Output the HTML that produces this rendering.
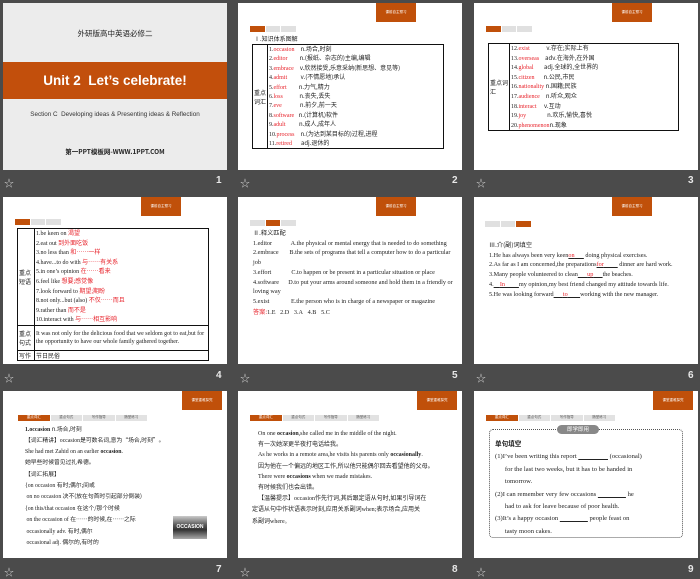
<!DOCTYPE html>
<html><head><meta charset="utf-8"><style>
*{margin:0;padding:0;box-sizing:border-box}
body{width:700px;height:576px;background:#4b4b4b;position:relative;overflow:hidden;font-family:"Liberation Serif","Noto Serif CJK SC",serif;color:#222}
.s{position:absolute;width:224px;height:167px;background:#fff;overflow:hidden}
.lb{position:absolute;color:#e8e8e8;font:bold 10px "Liberation Sans",sans-serif}
.st{position:absolute;color:#ccc;font-size:10px}
.tag{position:absolute;top:0;width:40px;height:19px;background:#c0500a;color:#fff;font-size:3.5px;text-align:center;line-height:19px;font-family:"Noto Sans CJK SC",sans-serif}
.tabs{position:absolute;left:12px;top:23px;width:47px;height:6px;background:#e0e0e0;display:flex}
.tabs i{flex:1;border-right:1px solid #fff}
.tabs i.o{background:#c0500a}
.tabs4{position:absolute;left:15px;top:24px;width:130px;height:6px;background:#e2e2e2;display:flex}
.tabs4 i{flex:1;border-right:1px solid #fff;font-style:normal;font-size:3.5px;color:#555;text-align:center;line-height:6px;font-family:"Noto Sans CJK SC",sans-serif}
.tabs4 i.o{background:#c0500a;color:#fff}
.t{position:absolute;font-size:6.2px;line-height:9.7px;white-space:nowrap}
.r{color:#e8222a}
table{position:absolute;border-collapse:collapse;border:1.5px solid #111;font-size:6px}
td{border:1px solid #111;vertical-align:middle;padding:0 1px}
.cj{font-family:"Noto Sans CJK SC",sans-serif}
</style></head><body>

<!-- slide 1 -->
<div class="s" style="left:3px;top:3px;background:#ececec">
 <div class="t cj" style="left:0;width:224px;text-align:center;top:26px;font-size:7.5px">外研版高中英语必修二</div>
 <div style="position:absolute;left:0;top:59px;width:224px;height:37px;background:#c24f0c;color:#fff;font:bold 13.5px 'Liberation Sans',sans-serif;text-align:center;line-height:37px">Unit 2&nbsp; Let’s celebrate!</div>
 <div class="t" style="left:0;width:224px;text-align:center;top:108px;font:6.3px 'Liberation Sans',sans-serif;color:#333">Section C&nbsp; Developing ideas &amp; Presenting ideas &amp; Reflection</div>
 <div class="t cj" style="left:0;width:224px;text-align:center;top:144px;font-size:6.5px;font-weight:bold">第一PPT模板网-WWW.1PPT.COM</div>
</div>
<div class="st" style="left:4px;top:175px">☆</div><div class="lb" style="left:216px;top:175px">1</div>

<!-- slide 2 -->
<div class="s" style="left:238px;top:3px">
 <div class="tag" style="left:138px">课前自主预习</div>
 <div class="tabs"><i class="o"></i><i></i><i></i></div>
 <div class="t cj" style="left:16px;top:31px;font-size:6px">Ⅰ.知识体系图解</div>
 <table style="left:14px;top:41px;width:192px;height:97px">
  <tr><td style="width:15px" class="cj">重点词汇</td><td style="line-height:8.4px;white-space:nowrap">
  1.<span class="r">occasion</span>&nbsp;&nbsp;&nbsp;&nbsp;<span class="cj">n.场合,时刻</span><br>
  2.<span class="r">editor</span>&nbsp;&nbsp;&nbsp;&nbsp;&nbsp;&nbsp;&nbsp;&nbsp;<span class="cj">n.(报纸、杂志的)主编,编辑</span><br>
  3.<span class="r">embrace</span>&nbsp;&nbsp;&nbsp;&nbsp;<span class="cj">v.欣然接受,乐意采纳(新思想、意见等)</span><br>
  4.<span class="r">admit</span>&nbsp;&nbsp;&nbsp;&nbsp;&nbsp;&nbsp;&nbsp;&nbsp;&nbsp;<span class="cj">v.(不情愿地)承认</span><br>
  5.<span class="r">effort</span>&nbsp;&nbsp;&nbsp;&nbsp;&nbsp;&nbsp;&nbsp;&nbsp;<span class="cj">n.力气,精力</span><br>
  6.<span class="r">loss</span>&nbsp;&nbsp;&nbsp;&nbsp;&nbsp;&nbsp;&nbsp;&nbsp;&nbsp;&nbsp;&nbsp;<span class="cj">n.丧失,丢失</span><br>
  7.<span class="r">eve</span>&nbsp;&nbsp;&nbsp;&nbsp;&nbsp;&nbsp;&nbsp;&nbsp;&nbsp;&nbsp;&nbsp;&nbsp;<span class="cj">n.前夕,前一天</span><br>
  8.<span class="r">software</span>&nbsp;&nbsp;&nbsp;<span class="cj">n.(计算机)软件</span><br>
  9.<span class="r">adult</span>&nbsp;&nbsp;&nbsp;&nbsp;&nbsp;&nbsp;&nbsp;&nbsp;&nbsp;<span class="cj">n.成人,成年人</span><br>
  10.<span class="r">process</span>&nbsp;&nbsp;&nbsp;&nbsp;<span class="cj">n.(为达到某目标的)过程,进程</span><br>
  11.<span class="r">retired</span>&nbsp;&nbsp;&nbsp;&nbsp;&nbsp;&nbsp;<span class="cj">adj.退休的</span></td></tr>
 </table>
</div>
<div class="st" style="left:240px;top:175px">☆</div><div class="lb" style="left:452px;top:175px">2</div>

<!-- slide 3 -->
<div class="s" style="left:474px;top:3px">
 <div class="tag" style="left:138px">课前自主预习</div>
 <div class="tabs"><i class="o"></i><i></i><i></i></div>
 <table style="left:14px;top:40px;width:191px;height:80px">
  <tr><td style="width:21px" class="cj">重点词汇</td><td style="line-height:8.6px;white-space:nowrap">
  12.<span class="r">exist</span>&nbsp;&nbsp;&nbsp;&nbsp;&nbsp;&nbsp;&nbsp;&nbsp;&nbsp;&nbsp;&nbsp;<span class="cj">v.存在;实际上有</span><br>
  13.<span class="r">overseas</span>&nbsp;&nbsp;&nbsp;&nbsp;<span class="cj">adv.在海外,在外国</span><br>
  14.<span class="r">global</span>&nbsp;&nbsp;&nbsp;&nbsp;&nbsp;&nbsp;&nbsp;<span class="cj">adj.全球的,全世界的</span><br>
  15.<span class="r">citizen</span>&nbsp;&nbsp;&nbsp;&nbsp;&nbsp;&nbsp;<span class="cj">n.公民,市民</span><br>
  16.<span class="r">nationality</span>&nbsp;<span class="cj">n.国籍;民族</span><br>
  17.<span class="r">audience</span>&nbsp;&nbsp;&nbsp;&nbsp;<span class="cj">n.听众,观众</span><br>
  18.<span class="r">interact</span>&nbsp;&nbsp;&nbsp;&nbsp;&nbsp;<span class="cj">v.互动</span><br>
  19.<span class="r">joy</span>&nbsp;&nbsp;&nbsp;&nbsp;&nbsp;&nbsp;&nbsp;&nbsp;&nbsp;&nbsp;&nbsp;&nbsp;&nbsp;&nbsp;<span class="cj">n.欢乐,愉快,喜悦</span><br>
  20.<span class="r">phenomenon</span><span class="cj">n.现象</span></td></tr>
 </table>
</div>
<div class="st" style="left:476px;top:175px">☆</div><div class="lb" style="left:688px;top:175px">3</div>

<!-- slide 4 -->
<div class="s" style="left:3px;top:197px">
 <div class="tag" style="left:138px">课前自主预习</div>
 <div class="tabs" style="top:22px;left:12px"><i class="o"></i><i></i><i></i></div>
 <table style="left:14px;top:31px;width:192px;height:121px">
  <tr><td style="width:17px" class="cj">重点短语</td><td style="line-height:8.6px;white-space:nowrap">
  1.be keen on <span class="r cj">渴望</span><br>2.eat out <span class="r cj">到外面吃饭</span><br>3.no less than <span class="r cj">和……一样</span><br>4.have...to do with <span class="r cj">与……有关系</span><br>5.in one’s opinion <span class="r cj">在……看来</span><br>6.feel like <span class="r cj">想要;感觉像</span><br>7.look forward to <span class="r cj">期望;期盼</span><br>8.not only...but (also) <span class="r cj">不仅……而且</span><br>9.rather than <span class="r cj">而不是</span><br>10.interact with <span class="r cj">与……相互影响</span></td></tr>
  <tr><td class="cj">重点句式</td><td style="line-height:8px;height:25px">It was not only for the delicious food that we seldom got to eat,but for the opportunity to have our whole family gathered together.</td></tr>
  <tr><td class="cj">写作</td><td class="cj" style="height:9px">节日民俗</td></tr>
 </table>
</div>
<div class="st" style="left:4px;top:370px">☆</div><div class="lb" style="left:216px;top:370px">4</div>

<!-- slide 5 -->
<div class="s" style="left:238px;top:197px">
 <div class="tag" style="left:138px">课前自主预习</div>
 <div class="tabs"><i></i><i class="o"></i><i></i></div>
 <div class="t" style="left:15px;top:31px;white-space:normal;width:200px">
 <span class="cj">Ⅱ.释义匹配</span><br>
 1.editor&nbsp;&nbsp;&nbsp;&nbsp;&nbsp;&nbsp;&nbsp;&nbsp;&nbsp;&nbsp;&nbsp;&nbsp;A.the physical or mental energy that is needed to do something<br>
 2.embrace&nbsp;&nbsp;&nbsp;&nbsp;&nbsp;&nbsp;&nbsp;B.the sets of programs that tell a computer how to do a particular job<br>
 3.effort&nbsp;&nbsp;&nbsp;&nbsp;&nbsp;&nbsp;&nbsp;&nbsp;&nbsp;&nbsp;&nbsp;&nbsp;&nbsp;C.to happen or be present in a particular situation or place<br>
 4.software&nbsp;&nbsp;&nbsp;&nbsp;&nbsp;&nbsp;D.to put your arms around someone and hold them in a friendly or loving way<br>
 5.exist&nbsp;&nbsp;&nbsp;&nbsp;&nbsp;&nbsp;&nbsp;&nbsp;&nbsp;&nbsp;&nbsp;&nbsp;&nbsp;&nbsp;E.the person who is in charge of a newspaper or magazine<br>
 <span class="r cj">答案:</span>1.E&nbsp;&nbsp; 2.D&nbsp;&nbsp; 3.A&nbsp;&nbsp; 4.B&nbsp;&nbsp; 5.C</div>
</div>
<div class="st" style="left:240px;top:370px">☆</div><div class="lb" style="left:452px;top:370px">5</div>

<!-- slide 6 -->
<div class="s" style="left:474px;top:197px">
 <div class="tag" style="left:138px">课前自主预习</div>
 <div class="tabs" style="left:11px;top:24px"><i></i><i></i><i class="o"></i></div>
 <div class="t" style="left:15px;top:43px;white-space:normal;width:200px">
 <span class="cj">Ⅲ.介(副)词填空</span><br>
 1.He has always been very keen<u><span class="r">on</span>&nbsp;&nbsp;&nbsp;&nbsp;&nbsp;&nbsp;</u> doing physical exercises.<br>
 2.As far as I am concerned,the preparations<u><span class="r">for</span>&nbsp;&nbsp;&nbsp;&nbsp;&nbsp;&nbsp;&nbsp;&nbsp;&nbsp;</u> dinner are hard work.<br>
 3.Many people volunteered to clean<u>&nbsp;&nbsp;&nbsp;&nbsp;&nbsp;&nbsp;<span class="r">up</span>&nbsp;&nbsp;&nbsp;&nbsp;&nbsp;&nbsp;</u>the beaches.<br>
 4.<u>&nbsp;&nbsp;&nbsp;&nbsp;<span class="r">In</span>&nbsp;&nbsp;&nbsp;&nbsp;&nbsp;&nbsp;&nbsp;&nbsp;&nbsp;</u>my opinion,my best friend changed my attitude towards life.<br>
 5.He was looking forward<u>&nbsp;&nbsp;&nbsp;&nbsp;&nbsp;&nbsp;<span class="r">to</span>&nbsp;&nbsp;&nbsp;&nbsp;&nbsp;&nbsp;&nbsp;&nbsp;</u>working with the new manager.</div>
</div>
<div class="st" style="left:476px;top:370px">☆</div><div class="lb" style="left:688px;top:370px">6</div>

<!-- slide 7 -->
<div class="s" style="left:3px;top:391px">
 <div class="tag" style="left:179px">课堂重难探究</div>
 <div class="tabs4"><i class="o">重点词汇</i><i>重点句式</i><i>写作指导</i><i>随堂练习</i></div>
 <div class="t" style="left:22px;top:33px;line-height:10.4px;font-size:5.8px">
 <b>1.occasion</b> <span class="cj">n.场合,时刻</span><br>
 <span class="cj">【词汇精讲】</span>occasion<span class="cj">是可数名词,意为“场合,时刻”。</span><br>
 She had met Zahid on an earlier <b>occasion</b>.<br>
 <span class="cj">她早些时候曾见过扎希德。</span><br>
 <span class="cj">【词汇拓展】</span><br>
 {on occasion <span class="cj">有时;偶尔;间或</span><br>
 &nbsp;on no occasion <span class="cj">决不(放在句首时引起部分倒装)</span><br>
 {on this/that occasion <span class="cj">在这个/那个时候</span><br>
 &nbsp;on the occasion of <span class="cj">在……的时候,在……之际</span><br>
 &nbsp;occasionally adv. <span class="cj">有时,偶尔</span><br>
 &nbsp;occasional adj. <span class="cj">偶尔的,有时的</span></div>
 <div style="position:absolute;left:170px;top:125px;width:34px;height:23px;background:linear-gradient(#ccc,#555 40%,#333 60%,#aaa);color:#fff;font:bold 5px 'Liberation Sans',sans-serif;text-align:center;line-height:23px">OCCASION</div>
</div>
<div class="st" style="left:4px;top:564px">☆</div><div class="lb" style="left:216px;top:564px">7</div>

<!-- slide 8 -->
<div class="s" style="left:238px;top:391px">
 <div class="tag" style="left:179px">课堂重难探究</div>
 <div class="tabs4" style="left:12px"><i class="o">重点词汇</i><i>重点句式</i><i>写作指导</i><i>随堂练习</i></div>
 <div class="t" style="left:20px;top:38px;line-height:10.2px;font-size:6px">
 On one <b>occasion</b>,she called me in the middle of the night.<br>
 <span class="cj">有一次她深更半夜打电话给我。</span><br>
 As he works in a remote area,he visits his parents only <b>occasionally</b>.<br>
 <span class="cj">因为他在一个偏远的地区工作,所以他只能偶尔回去看望他的父母。</span><br>
 There were <b>occasions</b> when we made mistakes.<br>
 <span class="cj">有时候我们也会出错。</span><br>
 <span class="cj">【温馨提示】</span>occasion<span class="cj">作先行词,其后跟定语从句时,如果引导词在</span><br>
 <span class="cj" style="margin-left:-6px">定语从句中作状语表示时刻,应用关系副词</span>when;<span class="cj">表示场合,应用关</span><br>
 <span class="cj" style="margin-left:-6px">系副词</span>where。</div>
</div>
<div class="st" style="left:240px;top:564px">☆</div><div class="lb" style="left:452px;top:564px">8</div>

<!-- slide 9 -->
<div class="s" style="left:474px;top:391px">
 <div class="tag" style="left:179px">课堂重难探究</div>
 <div class="tabs4" style="left:12px"><i class="o">重点词汇</i><i>重点句式</i><i>写作指导</i><i>随堂练习</i></div>
 <div style="position:absolute;left:15px;top:38px;width:194px;height:109px;border:1.5px dotted #555;border-radius:4px"></div>
 <div class="cj" style="position:absolute;left:83px;top:34px;width:42px;height:9px;background:#888;border-radius:5px;color:#fff;font-size:5.5px;text-align:center;line-height:9px">即学即用</div>
 <div class="t" style="left:21px;top:46px;line-height:12.4px;font-size:6.6px;color:#222">
 <b class="cj">单句填空</b><br>
 (1)I’ve been writing this report <u>&nbsp;&nbsp;&nbsp;&nbsp;&nbsp;&nbsp;&nbsp;&nbsp;&nbsp;&nbsp;&nbsp;&nbsp;&nbsp;&nbsp;&nbsp;&nbsp;&nbsp;&nbsp;</u> (occasional)<br>
 &nbsp;&nbsp;&nbsp;&nbsp;&nbsp;&nbsp;for the last two weeks, but it has to be handed in<br>
 &nbsp;&nbsp;&nbsp;&nbsp;&nbsp;&nbsp;tomorrow.<br>
 (2)I can remember very few occasions <u>&nbsp;&nbsp;&nbsp;&nbsp;&nbsp;&nbsp;&nbsp;&nbsp;&nbsp;&nbsp;&nbsp;&nbsp;&nbsp;&nbsp;&nbsp;&nbsp;&nbsp;</u> he<br>
 &nbsp;&nbsp;&nbsp;&nbsp;&nbsp;&nbsp;had to ask for leave because of poor health.<br>
 (3)It’s a happy occasion <u>&nbsp;&nbsp;&nbsp;&nbsp;&nbsp;&nbsp;&nbsp;&nbsp;&nbsp;&nbsp;&nbsp;&nbsp;&nbsp;&nbsp;&nbsp;&nbsp;&nbsp;</u> people feast on<br>
 &nbsp;&nbsp;&nbsp;&nbsp;&nbsp;&nbsp;tasty moon cakes.</div>
</div>
<div class="st" style="left:476px;top:564px">☆</div><div class="lb" style="left:688px;top:564px">9</div>

</body></html>
